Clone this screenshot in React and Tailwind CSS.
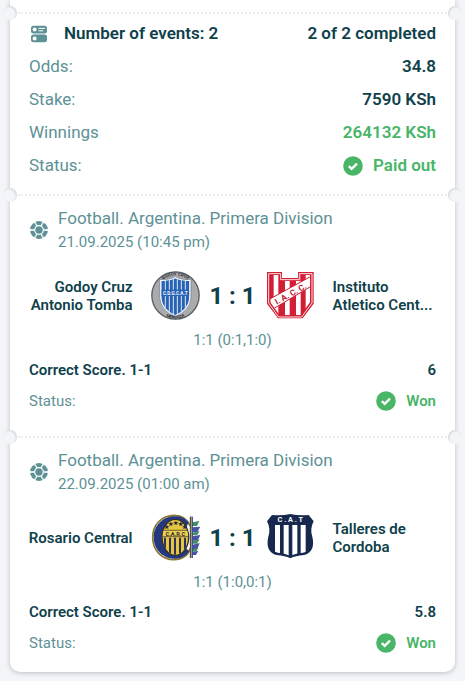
import React from 'react';

const summary = [
  { label: 'Odds:', value: '34.8' },
  { label: 'Stake:', value: '7590 KSh' },
  { label: 'Winnings', value: '264132 KSh', won: true },
];

const events = [
  {
    id: 1,
    league: 'Football. Argentina. Primera Division',
    date: '21.09.2025 (10:45 pm)',
    home: 'Godoy Cruz Antonio Tomba',
    away: 'Instituto Atletico Cent...',
    HomeCrest: GodoyCruzCrest,
    AwayCrest: InstitutoCrest,
    score: '1 : 1',
    periods: '1:1 (0:1,1:0)',
    market: 'Correct Score. 1-1',
    odds: '6',
  },
  {
    id: 2,
    league: 'Football. Argentina. Primera Division',
    date: '22.09.2025 (01:00 am)',
    home: 'Rosario Central',
    away: 'Talleres de Cordoba',
    HomeCrest: RosarioCrest,
    AwayCrest: TalleresCrest,
    score: '1 : 1',
    periods: '1:1 (1:0,0:1)',
    market: 'Correct Score. 1-1',
    odds: '5.8',
  },
];

function GodoyCruzCrest() {
  return (
    <svg className="w-[49px] h-[49px] shrink-0" viewBox="18 18 147 147" aria-hidden="true">
      <defs>
        <clipPath id="gc-shield">
          <path d="M49 48Q74 50 91 40Q108 50 133 48V98Q130 133 91 150Q52 133 49 98Z" />
        </clipPath>
        <path id="gc-top" d="M46 52A60 60 0 0 1 137 52" />
        <path id="gc-bottom" d="M52 147A66 66 0 0 0 131 147" />
      </defs>
      <circle cx="91.500" cy="91.500" r="71" fill="#a9abad" stroke="#5a5e63" strokeWidth="4" />
      <path d="M44 43Q74 46 91 34Q108 46 138 43V98Q135 137 91 155Q47 137 44 98Z" fill="#f5f8fc" stroke="#6d7680" strokeWidth="2" />
      <g clipPath="url(#gc-shield)">
        <rect x="48" y="38" width="87" height="114" fill="#2863b5" />
        <path d="M61 38V152M73 38V152M85 38V152M97 38V152M109 38V152M121 38V152" stroke="#dce8f6" strokeWidth="3" />
        <rect x="48" y="74" width="87" height="19" fill="#2863b5" />
      </g>
      <text x="91" y="89" textAnchor="middle" fontSize="14" fontWeight="700" fill="#f3f7fc">C.D.G.C.A.T</text>
      <text fontSize="13" fontWeight="700" fill="#26292d">
        <textPath href="#gc-top" startOffset="50%" textAnchor="middle">GODOY CRUZ</textPath>
      </text>
      <text fontSize="12" fontWeight="700" fill="#26292d">
        <textPath href="#gc-bottom" startOffset="50%" textAnchor="middle">MENDOZA</textPath>
      </text>
    </svg>
  );
}

function InstitutoCrest() {
  return (
    <svg className="w-[49px] h-[49px] shrink-0" viewBox="18 18 147 147" aria-hidden="true">
      <defs>
        <clipPath id="in-shield">
          <path d="M31 30H58V48H122V30H150V112L122 151H59L31 112Z" />
        </clipPath>
      </defs>
      <path d="M21 21H66V39H114V21H161V116L128 160H54L21 116Z" fill="#d31f36" />
      <path d="M26 26H62V44H118V26H156V114L125 156H56L26 114Z" fill="none" stroke="#fbe3e6" strokeWidth="3" />
      <g clipPath="url(#in-shield)">
        <rect x="28" y="26" width="126" height="130" fill="#d31f36" />
        <path d="M48 26V156M82 26V156M115 26V156M144 26V156" stroke="#fff" strokeWidth="14" />
        <path d="M26 104L153 34V64L34 135Z" fill="#fff" stroke="#d31f36" strokeWidth="3" />
      </g>
      <text transform="translate(96 94) rotate(-29)" textAnchor="middle" fontSize="25" fontWeight="700" fill="#b71c31">I. A. C. C.</text>
    </svg>
  );
}

function RosarioCrest() {
  return (
    <svg className="w-[49px] h-[49px] shrink-0" viewBox="18 18 147 147" aria-hidden="true">
      <defs>
        <clipPath id="rc-ball">
          <ellipse cx="91" cy="91" rx="38" ry="52" />
        </clipPath>
      </defs>
      <g fill="#4a4fa8">
        <path d="M143 61L166 59L157 76H143ZM143 88L166 84L158 101H143ZM143 113L164 108L157 126H143ZM143 135L160 131L153 144H143Z" />
      </g>
      <g fill="#3f8f63">
        <path d="M143 46L163 42L156 57H143ZM143 77L164 72L156 85H143ZM143 102L164 97L156 110H143ZM143 126L160 123L153 134H143Z" />
      </g>
      <path d="M135 57C126 32 108 25 87 25C49 25 23 54 23 91C23 132 52 158 87 158C110 158 130 147 136 124" fill="none" stroke="#8b7932" strokeWidth="5" />
      <path d="M131 48C119 31 105 28 88 28C53 28 26 57 26 91C26 128 54 155 88 155C109 155 123 148 133 132L122 124C110 140 91 144 78 136C61 128 54 111 54 91C54 66 67 43 88 43C102 43 114 50 121 63Z" fill="#24377f" />
      <ellipse cx="91" cy="91" rx="40" ry="54" fill="#e7c63f" stroke="#30302f" strokeWidth="4" />
      <g clipPath="url(#rc-ball)">
        <path d="M60 92V146M75 92V150M90 92V150M105 92V150M120 92V146" stroke="#2b315b" strokeWidth="6" />
        <path d="M50 70H132V89H50Z" fill="#efd14d" stroke="#2a2a35" strokeWidth="2" />
      </g>
      <text x="91" y="86" textAnchor="middle" fontSize="17" fontWeight="700" fill="#26243a">C.A.R.C</text>
      <g fill="#27273d" fontSize="17" textAnchor="middle">
        <text x="65" y="67">★</text>
        <text x="77" y="57">★</text>
        <text x="92" y="53">★</text>
        <text x="107" y="57">★</text>
        <text x="119" y="67">★</text>
      </g>
      <path d="M139 29V153" stroke="#24377f" strokeWidth="9" />
      <path d="M139 29V153" stroke="#c9b045" strokeWidth="3" />
    </svg>
  );
}

function TalleresCrest() {
  return (
    <svg className="w-[49px] h-[49px] shrink-0" viewBox="18 18 147 147" aria-hidden="true">
      <defs>
        <clipPath id="ta-body">
          <path d="M31 53H150Q142 74 150 94C155 118 148 132 129 137Q103 140 91 147Q78 140 53 137C33 132 26 118 31 94Q39 74 31 53Z" />
        </clipPath>
      </defs>
      <path d="M36 24Q65 27 91 21Q117 27 146 24L161 43Q149 66 157 89C164 119 155 138 132 144Q106 146 91 154Q75 146 50 144C27 138 18 119 25 89Q33 66 21 43Z" fill="#17284e" />
      <g clipPath="url(#ta-body)" fill="#fff">
        <rect x="45" y="53" width="15" height="96" />
        <rect x="71" y="53" width="15" height="96" />
        <rect x="97" y="53" width="15" height="96" />
        <rect x="122" y="53" width="15" height="96" />
      </g>
      <text x="91" y="46" textAnchor="middle" fontSize="22" fontWeight="700" fill="#fff">C . A . T</text>
    </svg>
  );
}

function EventsIcon() {
  return (
    <svg className="w-[19px] h-[18px] shrink-0" viewBox="0 0 19 18" aria-hidden="true">
      <rect x="2" y="0.800" width="16" height="7.600" rx="2.500" fill="#5d9196" />
      <rect x="2" y="9.600" width="16" height="7.600" rx="2.500" fill="#5d9196" />
      <circle cx="5.600" cy="4.600" r="2" fill="#fff" />
      <circle cx="5.600" cy="13.400" r="2" fill="#fff" />
      <path d="M9.500 3.400H16M9.500 5.800H14" stroke="#fff" strokeWidth="1" />
    </svg>
  );
}

function BallIcon() {
  return (
    <svg className="w-[19px] h-[18px] shrink-0" viewBox="-1 0 19 18" aria-hidden="true">
      <circle cx="9" cy="9" r="9" fill="#5d9196" />
      <circle cx="9" cy="9" r="4.300" fill="none" stroke="#fff" strokeWidth="1.200" />
      <path d="M7 5.300L5.500 2.300M11 5.300L12.500 2.300M13.200 9H17M11 12.700L12.500 15.700M7 12.700L5.500 15.700M4.800 9H1" stroke="#fff" strokeWidth="1.300" />
      <path d="M6 0L5.500 2.400L3.200 2.200ZM12 0L12.500 2.400L14.800 2.200ZM18 7.500L16.300 9L18 10.500ZM12 18L12.500 15.600L14.800 15.800ZM6 18L5.500 15.600L3.200 15.800ZM0 7.500L1.700 9L0 10.500Z" fill="#fff" />
    </svg>
  );
}

function CheckIcon() {
  return (
    <svg className="w-5 h-5 shrink-0" viewBox="0 0 20 20" aria-hidden="true">
      <circle cx="10" cy="10" r="9.800" fill="#48b567" />
      <path d="M5.800 10.100L8.700 12.900L14 7.600" fill="none" stroke="#fff" strokeWidth="2.300" />
    </svg>
  );
}

// Perforated line with a punched hole on each edge of the ticket
function Divider() {
  return (
    <div className="relative h-0">
      <div className="mx-2 border-t-2 border-dotted border-[#e9ebed]" />
      <span className="absolute -left-[7px] -top-1.5 w-3.5 h-3.5 rounded-full bg-[#f4f5f9] shadow-[inset_-1px_1px_2px_#d5d7dc]" />
      <span className="absolute -right-[7px] -top-1.5 w-3.5 h-3.5 rounded-full bg-[#f4f5f9] shadow-[inset_1px_1px_2px_#d5d7dc]" />
    </div>
  );
}

function EventSection({ event }) {
  const { HomeCrest, AwayCrest } = event;

  return (
    <section className="px-[19px] pt-3 pb-[25px] last:pb-[19px]">
      <div className="flex items-center gap-2.5">
        <BallIcon />
        <div>
          <h2 className="text-[17px] leading-6">{event.league}</h2>
          <p className="text-[15px] leading-6">{event.date}</p>
        </div>
      </div>

      <div className="-mx-2 mt-[17px] flex items-center gap-[18px] text-[15px] leading-[18px] font-semibold text-[#0f414b]">
        <p className="flex-1 min-w-0 text-right">{event.home}</p>
        <div className="flex items-center">
          <HomeCrest />
          <p className="w-[66px] text-center text-2xl font-bold">{event.score}</p>
          <AwayCrest />
        </div>
        <p className="flex-1 min-w-0">{event.away}</p>
      </div>

      <p className="mt-2.5 text-center text-[15px] leading-5">{event.periods}</p>

      <dl className="mt-2.5 text-[15px] leading-5">
        <div className="flex justify-between font-semibold text-[#0f414b]">
          <dt>{event.market}</dt>
          <dd>{event.odds}</dd>
        </div>
        <div className="mt-[11px] flex justify-between">
          <dt>Status:</dt>
          <dd className="flex items-center gap-2.5 font-semibold text-[#48b567]">
            <CheckIcon />
            Won
          </dd>
        </div>
      </dl>
    </section>
  );
}

export default function App() {
  return (
    <main className="min-h-screen bg-[#f4f5f9] px-2.5 pb-2.5 font-['Roboto',sans-serif] text-[#5d9196]">
      <article className="rounded-b-[10px] bg-white pt-3 shadow-[0_1px_5px_#b9bdc5]">
        <Divider />
        <section className="px-[19px] pt-[5px] pb-3">
          <div className="flex h-[33px] items-center text-[17px] font-semibold text-[#0f414b]">
            <EventsIcon />
            <h1 className="ml-4">Number of events: 2</h1>
            <p className="ml-auto">2 of 2 completed</p>
          </div>
          <dl className="text-[17px]">
            {summary.map((row) => (
              <div key={row.label} className="flex h-[33px] items-center justify-between">
                <dt>{row.label}</dt>
                <dd className={row.won ? 'font-semibold text-[#48b567]' : 'font-semibold text-[#0f414b]'}>{row.value}</dd>
              </div>
            ))}
            <div className="flex h-[33px] items-center justify-between">
              <dt>Status:</dt>
              <dd className="flex items-center gap-2.5 font-semibold text-[#48b567]">
                <CheckIcon />
                Paid out
              </dd>
            </div>
          </dl>
        </section>

        {events.map((event) => (
          <React.Fragment key={event.id}>
            <Divider />
            <EventSection event={event} />
          </React.Fragment>
        ))}
      </article>
    </main>
  );
}
